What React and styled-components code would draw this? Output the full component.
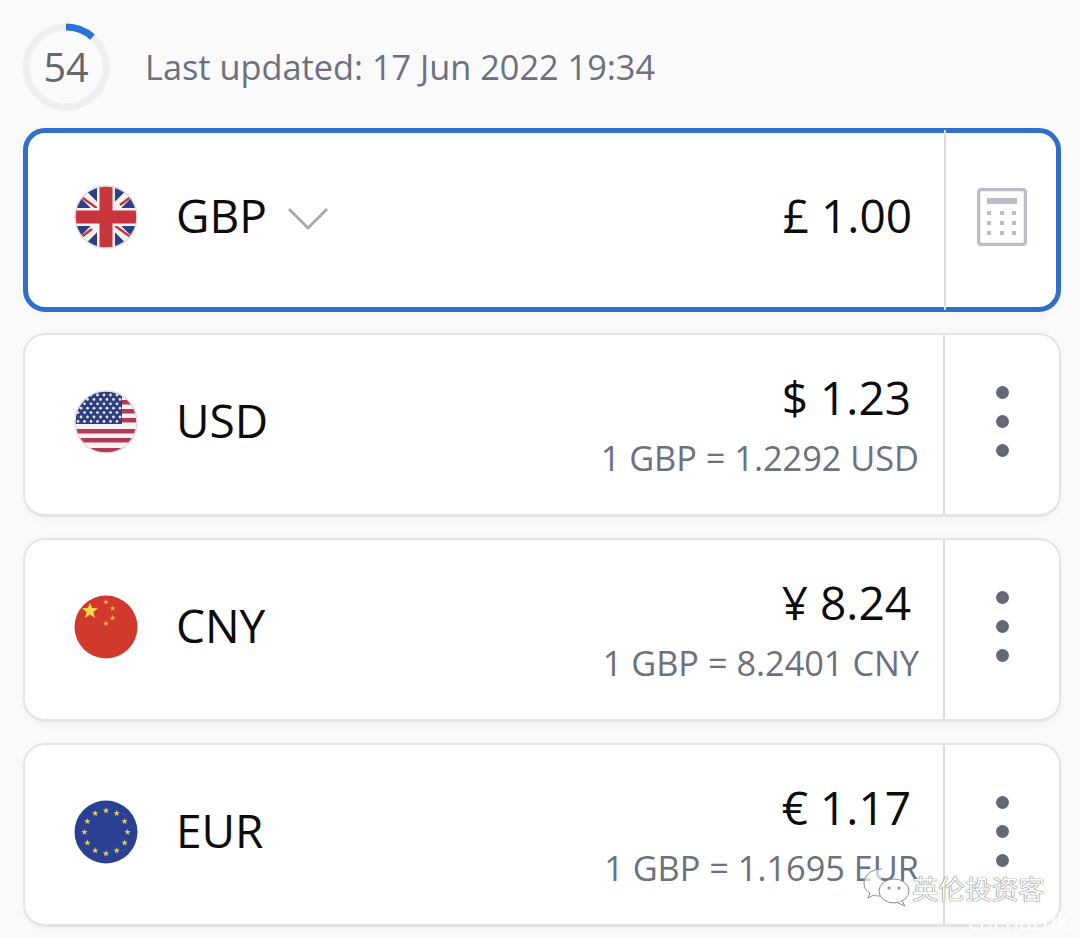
import React from "react";
import styled, { createGlobalStyle } from "styled-components";

const GlobalStyle = createGlobalStyle`
  html, body {
    margin: 0;
    padding: 0;
    height: 937px;
    overflow: hidden;
    background: #fafafb;
    font-family: "Open Sans", "Noto Sans", "Liberation Sans", sans-serif;
  }
  * {
    box-sizing: border-box;
  }
`;

const rates = [
  { code: "USD", flag: "us", amount: "$ 1.23", rate: "1 GBP = 1.2292 USD" },
  { code: "CNY", flag: "cn", amount: "¥ 8.24", rate: "1 GBP = 8.2401 CNY" },
  { code: "EUR", flag: "eu", amount: "€ 1.17", rate: "1 GBP = 1.1695 EUR" },
];

const starPoints = (cx, cy, r, rot = -90) => {
  const pts = [];
  for (let i = 0; i < 10; i++) {
    const rad = i % 2 === 0 ? r : r * 0.42;
    const a = ((rot + i * 36) * Math.PI) / 180;
    pts.push(`${cx + rad * Math.cos(a)},${cy + rad * Math.sin(a)}`);
  }
  return pts.join(" ");
};

const FlagGb = () => (
  <FlagSvg viewBox="0 0 64 64">
    <defs>
      <clipPath id="gbClip">
        <circle cx="32" cy="32" r="31" />
      </clipPath>
    </defs>
    <g clipPath="url(#gbClip)">
      <rect width="64" height="64" fill="#2f3f86" />
      <path d="M0 0L64 64M64 0L0 64" stroke="#f4f2f2" strokeWidth="9" />
      <path d="M2 8L24 24M62 8L46 20M2 56L18 44M62 56L40 40" stroke="#c8353c" strokeWidth="2.5" />
      <rect x="23" width="18" height="64" fill="#f4f2f2" />
      <rect y="23" width="64" height="18" fill="#f4f2f2" />
      <rect x="25.5" width="13" height="64" fill="#c8353c" />
      <rect y="25.5" width="64" height="13" fill="#c8353c" />
    </g>
    <circle cx="32" cy="32" r="31" fill="none" stroke="#dddde2" strokeWidth="1.5" />
  </FlagSvg>
);

const FlagUs = () => {
  const stars = [];
  for (let row = 0; row < 7; row++) {
    for (let col = 0; col < 7; col++) {
      stars.push(
        <circle
          key={`${row}-${col}`}
          cx={4 + col * 6.5 + (row % 2 ? 3 : 0)}
          cy={5 + row * 4.4}
          r="1.4"
          fill="#dfe5f4"
        />
      );
    }
  }
  return (
    <FlagSvg viewBox="0 0 64 64">
      <defs>
        <clipPath id="usClip">
          <circle cx="32" cy="32" r="31" />
        </clipPath>
      </defs>
      <g clipPath="url(#usClip)">
        <rect width="64" height="64" fill="#f6f3f4" />
        {[10, 19, 28, 39, 48, 58].map((y) => (
          <rect key={y} y={y} width="64" height="4.5" fill="#b23a52" />
        ))}
        <rect width="48" height="34" fill="#2f3f7e" />
        {stars}
      </g>
      <circle cx="32" cy="32" r="31" fill="none" stroke="#dddde2" strokeWidth="1.5" />
    </FlagSvg>
  );
};

const FlagCn = () => (
  <FlagSvg viewBox="0 0 64 64">
    <circle cx="32" cy="32" r="31.5" fill="#d0392b" />
    <polygon points={starPoints(16, 16, 8.5)} fill="#f8d94a" />
    <polygon points={starPoints(32, 7, 3)} fill="#f3b53f" />
    <polygon points={starPoints(38.7, 13.5, 3)} fill="#f3b53f" />
    <polygon points={starPoints(38.7, 23, 3)} fill="#f3b53f" />
    <polygon points={starPoints(32, 28.6, 3)} fill="#f3b53f" />
  </FlagSvg>
);

const FlagEu = () => (
  <FlagSvg viewBox="0 0 64 64">
    <circle cx="32" cy="32" r="31.5" fill="#2a4093" />
    {Array.from({ length: 12 }).map((_, i) => {
      const a = (i * 30 * Math.PI) / 180;
      return (
        <polygon
          key={i}
          points={starPoints(32 + 21.5 * Math.cos(a), 32 + 21.5 * Math.sin(a), 3.3)}
          fill="#e3cc58"
        />
      );
    })}
  </FlagSvg>
);

const flags = { us: FlagUs, cn: FlagCn, eu: FlagEu };

const CalcIcon = () => (
  <svg width="50" height="58" viewBox="0 0 50 58">
    <rect x="1.5" y="1.5" width="47" height="55" rx="3" fill="none" stroke="#bcbcc6" strokeWidth="3.5" />
    <rect x="10" y="10" width="30" height="6" fill="#bcbcc6" />
    {[25, 35, 45].map((y) =>
      [12, 25, 37].map((x) => (
        <rect key={`${x}-${y}`} x={x - 2} y={y - 2} width="4" height="4" fill="#bcbcc6" />
      ))
    )}
  </svg>
);

const App = () => (
  <Page>
    <GlobalStyle />
    <Header>
      <Ring>
        <svg width="88" height="88" viewBox="0 0 88 88">
          <circle cx="44" cy="44" r="40" fill="none" stroke="#efeff1" strokeWidth="7" />
          <path d="M44 4A40 40 0 0 1 70.5 14" fill="none" stroke="#2a72d6" strokeWidth="7" />
        </svg>
        <RingNum>54</RingNum>
      </Ring>
      <Updated>Last updated: 17 Jun 2022 19:34</Updated>
    </Header>
    <List>
      <Card $active>
        <Currency $active>
          <FlagGb />
          <Code>GBP</Code>
          <Chevron width="42" height="24" viewBox="0 0 42 24">
            <path d="M2 2L21 21L40 2" fill="none" stroke="#a9a9b3" strokeWidth="3" />
          </Chevron>
        </Currency>
        <Values $single>
          <Amount>£ 1.00</Amount>
        </Values>
        <Action $active>
          <CalcIcon />
        </Action>
      </Card>
      {rates.map((r) => {
        const Flag = flags[r.flag];
        return (
          <Card key={r.code}>
            <Currency>
              <Flag />
              <Code>{r.code}</Code>
            </Currency>
            <Values>
              <Amount>{r.amount}</Amount>
              <Rate>{r.rate}</Rate>
            </Values>
            <Action>
              <Dots>
                <i />
                <i />
                <i />
              </Dots>
            </Action>
          </Card>
        );
      })}
    </List>
    <Watermark>
      <svg width="50" height="42" viewBox="0 0 50 42">
        <path
          d="M20 3C10 3 2 9 2 17c0 4 2 8 6 10l-2 5 6-3c2 1 4 1 6 1"
          fill="#ffffffaa"
          stroke="#8b8b90"
          strokeWidth="1"
        />
        <ellipse cx="32" cy="25" rx="15" ry="12" fill="#ffffff" stroke="#8b8b90" strokeWidth="1" />
        <path d="M40 35l3 5-7-3" fill="#fff" stroke="#8b8b90" strokeWidth="1" />
        <circle cx="27" cy="22" r="1.5" fill="#8b8b90" />
        <circle cx="37" cy="22" r="1.5" fill="#8b8b90" />
      </svg>
      <WatermarkText>英伦投资客</WatermarkText>
    </Watermark>
    <Handle>chi nazuk</Handle>
  </Page>
);

const Page = styled.div`
  position: relative;
  width: 1080px;
  height: 937px;
  overflow: hidden;
  padding: 0 19px 0 23px;
`;

const Header = styled.div`
  display: flex;
  align-items: center;
  gap: 35px;
  height: 128px;
  padding-top: 5px;
  margin-left: -1px;
`;

const Ring = styled.div`
  position: relative;
  width: 88px;
  height: 88px;
  flex: none;
`;

const RingNum = styled.div`
  position: absolute;
  inset: 0;
  display: flex;
  align-items: center;
  justify-content: center;
  font-size: 39.5px;
  color: #66666c;
`;

const Updated = styled.div`
  font-size: 34.3px;
  color: #6b7180;
  white-space: nowrap;
`;

const List = styled.div`
  display: flex;
  flex-direction: column;
  gap: 21px;
`;

const Card = styled.div`
  display: flex;
  height: 184px;
  background: #fff;
  border-radius: 22px;
  border: ${(p) => (p.$active ? "5px solid #2f6fcb" : "2px solid #e4e4e6")};
  border-bottom-width: ${(p) => (p.$active ? "5px" : "3px")};
  box-shadow: 0 2px 10px rgba(0, 0, 0, 0.035);
`;

const Currency = styled.div`
  display: flex;
  align-items: center;
  flex: 1;
  padding-left: ${(p) => (p.$active ? "46px" : "49px")};
  padding-bottom: 6px;
`;

const FlagSvg = styled.svg`
  width: 64px;
  height: 64px;
  flex: none;
`;

const Code = styled.div`
  font-size: 46px;
  color: #0c0c0e;
  margin: 0 20px 4px 38px;
`;

const Chevron = styled.svg`
  margin-top: 4px;
`;

const Values = styled.div`
  display: flex;
  flex-direction: column;
  align-items: flex-end;
  justify-content: center;
  padding-right: 24px;
  padding-bottom: ${(p) => (p.$single ? "10px" : "2px")};
`;

const Amount = styled.div`
  font-size: 46px;
  color: #0c0c0e;
  padding-right: 8px;
  line-height: 60px;
`;

const Rate = styled.div`
  font-size: 34.3px;
  color: #6b7180;
  line-height: 46px;
  margin-top: 8px;
`;

const Action = styled.div`
  display: flex;
  align-items: center;
  justify-content: center;
  width: ${(p) => (p.$active ? "112px" : "116px")};
  flex: none;
  border-left: 2px solid #dcdcdf;
  padding-bottom: 6px;
  padding-left: ${(p) => (p.$active ? "2px" : "0")};
  margin: ${(p) => (p.$active ? "-3px 0" : "0")};
`;

const Dots = styled.div`
  display: flex;
  flex-direction: column;
  gap: 16px;

  & > i {
    display: block;
    width: 13px;
    height: 13px;
    border-radius: 50%;
    background: #636875;
  }
`;

const Watermark = styled.div`
  position: absolute;
  left: 862px;
  top: 866px;
  display: flex;
  align-items: center;
`;

const WatermarkText = styled.div`
  font-family: "Noto Sans CJK SC", sans-serif;
  font-size: 26.6px;
  color: #fff;
  text-shadow: 0 0 1px #555, 0 0 1px #555;
`;

const Handle = styled.div`
  position: absolute;
  left: 968px;
  top: 909px;
  font-size: 23px;
  line-height: 24px;
  color: #fff;
  white-space: nowrap;
`;

export default App;
